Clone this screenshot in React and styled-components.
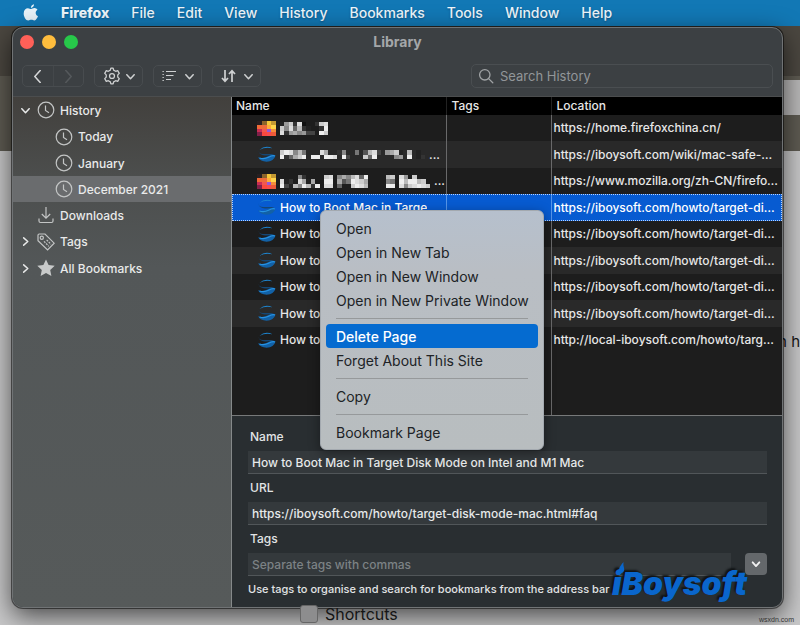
import React from "react";
import styled, { createGlobalStyle } from "styled-components";

const GlobalStyle = createGlobalStyle`
  * { box-sizing: border-box; }
  body { margin: 0; background: #c4c4c5; }
  body, button, input { font-family: Inter, "Liberation Sans", sans-serif; }
  button { border: 0; padding: 0; background: none; color: inherit; font-size: inherit; }
`;

const Desktop = styled.div`
  display: flex;
  flex-direction: column;
  min-height: 100vh;
  overflow: hidden;
`;

const MenuBar = styled.nav`
  display: flex;
  align-items: center;
  gap: 22px;
  height: 26px;
  padding-left: 23px;
  background: #1278b5;
  color: #edf5fa;
  font-size: 14px;
`;

const MenuTitle = styled.button`
  font-weight: ${(p) => (p.$app ? 800 : 500)};
  line-height: 20px;
  text-shadow: 0 1px 2px rgba(0, 30, 60, 0.4);
`;

const AppleMark = styled.svg`
  width: 16px;
  height: 18px;
  display: block;
`;

const Stage = styled.div`
  position: relative;
  display: flex;
  flex: 1;
  padding: 1px 17px 17px 12px;
`;

const Backdrop = styled.div`
  position: absolute;
  inset: 0;
  overflow: hidden;
  background: linear-gradient(#4b4740 0 50px, #5e5b52 50px 125px, #c8c8c9 125px);
`;

const BackdropPanel = styled.div`
  position: absolute;
  top: 54px;
  right: 0;
  width: 17px;
  height: 35px;
  background: #b9b8b8;
`;

const BackdropText = styled.span`
  position: absolute;
  top: 306px;
  right: 0;
  color: #161616;
  font-size: 15px;
  line-height: 20px;
  white-space: nowrap;
`;

const BackdropOption = styled.label`
  position: absolute;
  left: 300px;
  bottom: 1px;
  display: flex;
  align-items: center;
  gap: 7px;
  color: #151515;
  font-size: 16px;
  line-height: 20px;
  input {
    appearance: none;
    margin: 0;
    width: 18px;
    height: 18px;
    border: 1px solid #666;
    border-radius: 3px;
    background: #8d8d8e;
  }
`;

const Credit = styled.span`
  position: absolute;
  right: 6px;
  bottom: 0;
  color: #333;
  font-family: "Liberation Sans", sans-serif;
  font-size: 7px;
  line-height: 10px;
`;

const Window = styled.main`
  position: relative;
  display: flex;
  flex-direction: column;
  flex: 1;
  min-width: 0;
  border: 1px solid #707375;
  border-radius: 11px;
  background: #3c4043;
  box-shadow: 0 0 0 1px rgba(0, 0, 0, 0.5), 0 8px 26px rgba(0, 0, 0, 0.65);
`;

const TitleBar = styled.header`
  display: grid;
  grid-template-columns: 1fr auto 1fr;
  align-items: center;
  height: 28px;
  padding: 0 7px;
`;

const Lights = styled.div`
  display: flex;
  gap: 8px;
`;

const Light = styled.button`
  width: 14px;
  height: 14px;
  border-radius: 50%;
  background: ${(p) => p.$color};
`;

const Title = styled.h1`
  margin: 0;
  color: #a4a7a9;
  font-size: 14px;
  font-weight: 700;
  line-height: 20px;
`;

const Toolbar = styled.div`
  display: flex;
  align-items: center;
  gap: 10px;
  height: 40px;
  padding: 0 9px;
`;

const ToolGroup = styled.div`
  display: flex;
  width: 62px;
  height: 22px;
  border: 1px solid #484c4f;
  border-radius: 5px;
`;

const NavButton = styled.button`
  display: grid;
  place-items: center;
  flex: 1;
  color: ${(p) => (p.disabled ? "#55595c" : "#d6d7d8")};
  & + & { border-left: 1px solid #44484b; }
`;

const ToolButton = styled.button`
  display: flex;
  align-items: center;
  justify-content: space-between;
  width: 49px;
  height: 22px;
  padding: 0 6px 0 8px;
  border: 1px solid #484c4f;
  border-radius: 5px;
  color: #cfd1d2;
`;

const SearchBox = styled.label`
  display: flex;
  align-items: center;
  gap: 6px;
  width: 302px;
  height: 24px;
  margin-left: auto;
  padding: 0 6px;
  border: 1px solid #4a4e51;
  border-radius: 5px;
  color: #a0a3a5;
`;

const SearchInput = styled.input`
  flex: 1;
  min-width: 0;
  padding: 0;
  border: 0;
  outline: 0;
  background: none;
  color: #e4e4e4;
  font-size: 13px;
  &::placeholder { color: #929699; opacity: 1; }
`;

const Body = styled.div`
  display: flex;
  flex: 1;
  border-top: 1px solid #4b4d4e;
`;

const Sidebar = styled.nav`
  flex: 0 0 219px;
  border-right: 1px solid #85898a;
  border-bottom-left-radius: 10px;
  background: linear-gradient(#42403d, #4c4e4d 80px, #535758 170px, #565a5a);
`;

const TreeRow = styled.button`
  display: flex;
  align-items: center;
  gap: 5px;
  width: 100%;
  height: 26px;
  padding-left: ${(p) => (p.$nested ? 42 : 6)}px;
  background: ${(p) => (p.$selected ? "#6a6c6e" : "transparent")};
  color: #e9eaea;
  font-size: 12px;
  font-weight: 500;
  text-align: left;
  &:nth-child(4n + 2) { height: 27px; }
`;

const Twisty = styled.span`
  display: grid;
  place-items: center;
  width: 13px;
`;

const TreeIcon = styled.svg`
  width: 18px;
  height: 18px;
  fill: none;
  stroke: #c3c5c5;
  stroke-width: 1.2;
`;

const Content = styled.section`
  position: relative;
  display: flex;
  flex: 1;
  flex-direction: column;
  min-width: 0;
  border-bottom-right-radius: 10px;
  background: #292e31;
`;

const TableArea = styled.div`
  display: flex;
  flex: 1;
  border-bottom: 1px solid #77797a;
  background: #1d1d1d;
`;

const HistoryTable = styled.table`
  width: 100%;
  table-layout: fixed;
  border-collapse: separate;
  border-spacing: 0;
  color: #e7e7e7;
  font-size: 12px;
  line-height: 16px;
  th, td {
    padding: 0 2px;
    border-right: 1px solid #69696a;
    overflow: hidden;
    text-overflow: ellipsis;
    white-space: nowrap;
    text-align: left;
  }
  th {
    height: 18px;
    padding: 0 5px;
    border-right-color: #222;
    background: #000;
    font-weight: 500;
  }
  th:first-child { width: 39%; padding-left: 4px; }
  th:nth-child(2) { width: 105px; }
  td:last-child, th:last-child { border-right: 0; }
`;

const HistoryRow = styled.tr`
  height: 26px;
  font-weight: 500;
  &:nth-child(even) { height: 27px; background: #292929; }
  ${(p) => p.$selected && `
    && { background: #075bd1; color: #fff; outline: 1px dotted #b8d4ff; outline-offset: -1px; }
    && td { border-right-color: #5595e9; }
  `}
`;

const FillerRow = styled.tr``;

const NameCell = styled.span`
  display: flex;
  align-items: center;
  gap: 4px;
  padding-left: 23px;
`;

const NameText = styled.span`
  overflow: hidden;
  text-overflow: ellipsis;
  white-space: nowrap;
`;

const Mosaic = styled.svg`
  display: block;
  flex: none;
  shape-rendering: crispEdges;
`;

const SiteMark = styled.svg`
  display: block;
  flex: none;
  width: 19px;
  height: 19px;
`;

const Details = styled.form`
  display: flex;
  flex-direction: column;
  height: 191px;
  padding: 11px 15px 8px 16px;
  color: #e2e4e5;
  font-size: 12px;
  font-weight: 500;
`;

const FieldLabel = styled.label`
  padding-left: 2px;
  line-height: 20px;
`;

const FieldLine = styled.div`
  display: flex;
  gap: 14px;
  margin: 4px 0;
`;

const Field = styled.input`
  flex: 1;
  min-width: 0;
  height: 23px;
  padding: 0 4px;
  border: 0;
  border-bottom: 1px solid #515659;
  outline: 0;
  background: #34393c;
  color: #e7e9ea;
  font-size: 12px;
  font-weight: 500;
  &::placeholder { color: #7c8285; opacity: 1; }
`;

const ExpandButton = styled.button`
  display: grid;
  place-items: center;
  width: 22px;
  height: 22px;
  border-radius: 4px;
  background: #64686b;
  color: #f1f1f1;
`;

const Hint = styled.p`
  margin: 0;
  font-size: 11px;
  line-height: 18px;
  white-space: nowrap;
`;

const ContextMenu = styled.div`
  position: absolute;
  left: 88px;
  top: 113px;
  width: 224px;
  padding: 5px;
  border: 1px solid #a3a9af;
  border-radius: 6px;
  background: linear-gradient(#b6c0cd, #b9bec4 60px, #b8bdbf);
  box-shadow: 0 3px 12px rgba(0, 0, 0, 0.4);
  color: #202326;
  font-size: 14px;
`;

const ContextItem = styled.button`
  display: block;
  width: 100%;
  height: 24px;
  padding: 0 10px;
  border-radius: 4px;
  background: ${(p) => (p.$active ? "#056bd0" : "transparent")};
  color: ${(p) => (p.$active ? "#fff" : "inherit")};
  font-weight: ${(p) => (p.$active ? 500 : 400)};
  text-align: left;
  white-space: nowrap;
`;

const Separator = styled.hr`
  height: 1px;
  margin: 6px 10px 5px;
  border: 0;
  background: #96999b;
`;

const Watermark = styled.div`
  position: absolute;
  right: 35px;
  bottom: 1px;
  color: #0a66cc;
  font-size: 32px;
  font-style: italic;
  font-weight: 900;
  line-height: 44px;
  text-shadow: -2px -2px 2px #101416;
`;

const Flame = styled.svg`
  position: absolute;
  left: 5px;
  top: 0;
  width: 8px;
  height: 12px;
`;

const Chevron = ({ d = "down", size = 11, weight = 1.6 }) => (
  <svg width={size} height={size} viewBox="0 0 12 12" fill="none" stroke="currentColor" strokeWidth={weight} strokeLinecap="round" strokeLinejoin="round">
    <path d={{ down: "M2 4l4 4.5L10 4", right: "M4 2l4.5 4L4 10", left: "M8.5 .5L3.5 6l5 5.5", next: "M3.5 .5L8.5 6l-5 5.5" }[d]} />
  </svg>
);

const Gear = () => (
  <svg width="18" height="18" viewBox="0 0 24 24" fill="none" stroke="currentColor" strokeWidth="1.7" strokeLinejoin="round">
    <path d="M9.8 4.2 10.5 1.5h3l.7 2.7 2.7 1.5 2.7-.8 2.1 3.6-2 2v3l2 2-2.1 3.6-2.7-.8-2.7 1.5-.7 2.7h-3l-.7-2.7-2.7-1.5-2.7.8-2.1-3.6 2-2v-3l-2-2 2.1-3.6 2.7.8z" />
    <circle cx="12" cy="12" r="3.3" />
  </svg>
);

const ListLines = () => (
  <svg width="15" height="14" viewBox="0 0 15 14" stroke="currentColor" strokeWidth="1.2">
    <path d="M.5 2.5h1.3M.5 5.5h1.3M.5 8.5h1.3M.5 11.5h1.3M4 2.5h10M4 6.5h7.5M4 10.5h5" />
  </svg>
);

const SortArrows = () => (
  <svg width="15" height="14" viewBox="0 0 15 14" fill="none" stroke="currentColor" strokeWidth="1.7">
    <path d="M4 1v11M1 9l3 3.3L7 9M11 13V2M8 5l3-3.3L14 5" />
  </svg>
);

const Magnifier = () => (
  <svg width="16" height="16" viewBox="0 0 16 16" fill="none" stroke="currentColor" strokeWidth="1.3" strokeLinecap="round">
    <circle cx="6.8" cy="6.8" r="5.2" />
    <path d="M10.6 10.6l4.2 4.2" />
  </svg>
);

const Clock = () => (
  <TreeIcon viewBox="0 0 18 18">
    <circle cx="9" cy="9" r="7.8" />
    <path d="M8.5 4.5v5l3.5 2.2" />
  </TreeIcon>
);

const Download = () => (
  <TreeIcon viewBox="0 0 18 18">
    <path d="M9 1v11M4.8 8L9 12.2 13.2 8M2 12.5V15q0 1.5 1.5 1.5h11q1.5 0 1.5-1.5v-2.5" />
  </TreeIcon>
);

const Tag = () => (
  <TreeIcon viewBox="0 0 18 18">
    <path d="M1 2.2Q1 1 2.2 1H8l9.2 9.2-6.6 6.8L1 7.8z" />
    <circle cx="4.8" cy="4.8" r="1.6" />
    <path d="M7 8.3l4.8 5M9.6 6.8l4.4 4.5" strokeDasharray="2 1" />
  </TreeIcon>
);

const Star = () => (
  <TreeIcon viewBox="0 0 18 18">
    <path fill="#c8caca" stroke="none" d="M9 .5l2.6 5.6 6.1.7-4.5 4.1 1.2 6.1L9 14l-5.4 3 1.2-6.1L.3 6.8l6.1-.7z" />
  </TreeIcon>
);

const SiteIcon = () => (
  <SiteMark viewBox="0 0 19 19">
    <path d="M2.5 5Q8 -.5 15.5 3.2Q8 1.5 2.5 5z" fill="#1d86d2" />
    <path d="M1.5 5.5Q1.5 8.8 6 9T17.5 9Q14 10.8 8 10.5T1.5 5.5z" fill="#154775" />
    <path d="M1 12.3Q6 13.8 10.5 11.5T18.5 10.5Q17 16.5 9.5 16.7Q3.5 16.6 1 12.3z" fill="#1261a6" />
    <path d="M2.5 13Q7 14.5 11.5 12.2T18 11" fill="none" stroke="#2793e4" strokeWidth="1.2" />
  </SiteMark>
);

const foxColors = [
  ["#282022", "#8d642a", "#f4c738", "#c49932"],
  ["#f26a37", "#ed6b3c", "#ffab38", "#ffd54a"],
  ["#c92d55", "#f25750", "#9558d7", "#f48d3b"],
  ["#812049", "#fb483e", "#f74b4d", "#ed5b39"],
];

const FoxIcon = () => (
  <Mosaic width="19" height="15" viewBox="0 0 20 16" preserveAspectRatio="none">
    {foxColors.map((line, y) => line.map((c, x) => (
      <rect key={`${x}-${y}`} x={x * 5} y={y * 4} width="5" height="4" fill={c} />
    )))}
  </Mosaic>
);

// One hexadecimal digit is the grey level of a cell; a dot leaves the cell empty.
const Censored = ({ lines }) => (
  <Mosaic width={Math.round(lines[0].length * 4.4)} height={Math.round(lines.length * 4.4)} viewBox={`0 0 ${lines[0].length} ${lines.length}`} preserveAspectRatio="none">
    {lines.map((line, y) => [...line].map((c, x) => c !== "." && (
      <rect key={`${x}-${y}`} x={x} y={y} width="1" height="1" fill={`#${c}${c}${c}`} />
    )))}
  </Mosaic>
);

const tree = [
  { label: "History", icon: Clock, twisty: "down" },
  { label: "Today", icon: Clock, nested: true },
  { label: "January", icon: Clock, nested: true },
  { label: "December 2021", icon: Clock, nested: true, selected: true },
  { label: "Downloads", icon: Download },
  { label: "Tags", icon: Tag, twisty: "right" },
  { label: "All Bookmarks", icon: Star, twisty: "right" },
];

const boot = "How to Boot Mac in Targe";
const target = "https://iboysoft.com/howto/target-disk-mode-mac.html";
const rows = [
  { fox: true, cells: ["29c3d1..3cd", "c8d6b32..3e", "d39a8944.ec"], url: "https://home.firefoxchina.cn/" },
  { cells: ["ced8b7...da..38..7.5bd4.9ac2.b.2.", "e36ace.ee.eed.e4...c6e....89.e.23"], url: "https://iboysoft.com/wiki/mac-safe-mode.html", more: true },
  { fox: true, cells: ["....83....cd.8a8bd6e....bc.d9.c...", "d23.da2a..ee.a57edca....87.ebeebc.", "e42b8eb3e.dd.6..cedb....ee.d8cdedc"], url: "https://www.mozilla.org/zh-CN/firefox/central/", more: true },
  { name: boot, url: target, selected: true },
  { name: boot, url: target },
  { name: boot, url: target },
  { name: boot, url: target },
  { name: boot, url: target },
  { name: boot, url: "http://local-iboysoft.com/howto/target-disk" },
];

const contextItems = ["Open", "Open in New Tab", "Open in New Window", "Open in New Private Window", null, "Delete Page", "Forget About This Site", null, "Copy", null, "Bookmark Page"];

export default function App() {
  return (
    <Desktop>
      <GlobalStyle />
      <MenuBar aria-label="Menu bar">
        <AppleMark viewBox="0 0 15 18" fill="#e8f2f8">
          <path d="M10.5.3c.1 2-1.4 3.6-3.1 3.7C7.2 2.2 8.8.6 10.5.3zM7.6 5c.8 0 1.8-1 3.4-.9 1.2.1 2.3.6 3 1.6-2.7 1.7-2.2 5.3.5 6.4-.6 1.8-2 4.3-3.5 4.4-1.2.1-1.7-.7-3.1-.7s-1.9.7-3.1.7C2.5 16.6 0 12.6.2 9.2.3 6 2.4 4.2 4.4 4.2 5.7 4.2 6.8 5 7.6 5z" />
        </AppleMark>
        {["Firefox", "File", "Edit", "View", "History", "Bookmarks", "Tools", "Window", "Help"].map((m, i) => (
          <MenuTitle key={m} $app={i === 0}>{m}</MenuTitle>
        ))}
      </MenuBar>
      <Stage>
        <Backdrop>
          <BackdropPanel />
          <BackdropText>n h</BackdropText>
        </Backdrop>
        <Window>
          <TitleBar>
            <Lights>
              <Light $color="#ff6058" aria-label="Close" />
              <Light $color="#ffbd3d" aria-label="Minimise" />
              <Light $color="#27c84a" aria-label="Zoom" />
            </Lights>
            <Title>Library</Title>
          </TitleBar>
          <Toolbar>
            <ToolGroup>
              <NavButton aria-label="Back"><Chevron d="left" size={13} weight={1.4} /></NavButton>
              <NavButton aria-label="Forward" disabled><Chevron d="next" size={13} weight={1.4} /></NavButton>
            </ToolGroup>
            <ToolButton aria-label="Organise"><Gear /><Chevron /></ToolButton>
            <ToolButton aria-label="Views"><ListLines /><Chevron /></ToolButton>
            <ToolButton aria-label="Sort"><SortArrows /><Chevron /></ToolButton>
            <SearchBox>
              <Magnifier />
              <SearchInput type="search" placeholder="Search History" aria-label="Search History" />
            </SearchBox>
          </Toolbar>
          <Body>
            <Sidebar aria-label="Library">
              {tree.map(({ label, icon: Icon, twisty, nested, selected }) => (
                <TreeRow key={label} $nested={nested} $selected={selected}>
                  {!nested && <Twisty>{twisty && <Chevron d={twisty} />}</Twisty>}
                  <Icon />
                  {label}
                </TreeRow>
              ))}
            </Sidebar>
            <Content>
              <TableArea>
                <HistoryTable>
                  <thead>
                    <tr><th>Name</th><th>Tags</th><th>Location</th></tr>
                  </thead>
                  <tbody>
                    {rows.map((r, i) => (
                      <HistoryRow key={i} $selected={r.selected}>
                        <td>
                          <NameCell>
                            {r.fox ? <FoxIcon /> : <SiteIcon />}
                            {r.cells && <Censored lines={r.cells} />}
                            {r.name && <NameText>{r.name}</NameText>}
                            {r.more && "..."}
                          </NameCell>
                        </td>
                        <td />
                        <td>{r.url}</td>
                      </HistoryRow>
                    ))}
                    <FillerRow><td /><td /><td /></FillerRow>
                  </tbody>
                </HistoryTable>
              </TableArea>
              <Details>
                <FieldLabel htmlFor="name">Name</FieldLabel>
                <FieldLine><Field id="name" defaultValue="How to Boot Mac in Target Disk Mode on Intel and M1 Mac" /></FieldLine>
                <FieldLabel htmlFor="url">URL</FieldLabel>
                <FieldLine><Field id="url" defaultValue="https://iboysoft.com/howto/target-disk-mode-mac.html#faq" /></FieldLine>
                <FieldLabel htmlFor="tags">Tags</FieldLabel>
                <FieldLine>
                  <Field id="tags" placeholder="Separate tags with commas" />
                  <ExpandButton type="button" aria-label="Show all tags"><Chevron weight={2.2} size={10} /></ExpandButton>
                </FieldLine>
                <Hint>Use tags to organise and search for bookmarks from the address bar</Hint>
              </Details>
              <ContextMenu role="menu">
                {contextItems.map((item, i) => item
                  ? <ContextItem key={item} role="menuitem" $active={item === "Delete Page"}>{item}</ContextItem>
                  : <Separator key={i} />)}
              </ContextMenu>
              <Watermark>
                <Flame viewBox="0 0 8 12"><path d="M6.5 0Q2 5 2 8t3 3q3-2 2-5T6.500 0z" fill="#0a66cc" /></Flame>
                iBoysoft
              </Watermark>
            </Content>
          </Body>
        </Window>
        <BackdropOption><input type="checkbox" />Shortcuts</BackdropOption>
        <Credit>wsxdn.com</Credit>
      </Stage>
    </Desktop>
  );
}
